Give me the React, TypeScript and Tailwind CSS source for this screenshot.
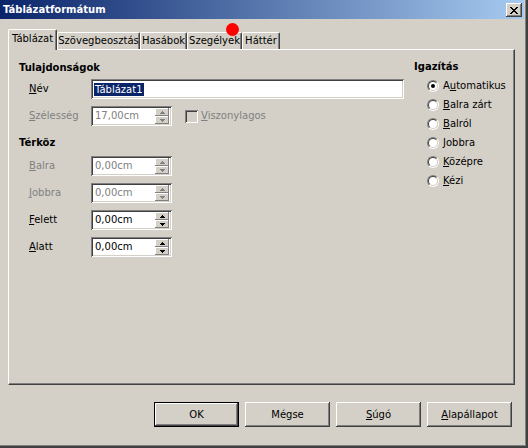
import React from 'react'

const raised =
  'bg-[#d4d0c8] shadow-[inset_-1px_-1px_#404040,inset_1px_1px_#ffffff,inset_-2px_-2px_#808080,inset_2px_2px_#d4d0c8]'
const spinBtn = 'bg-[#d4d0c8] shadow-[inset_-1px_-1px_#808080,inset_1px_1px_#ffffff]'
const sunken =
  'shadow-[inset_1px_1px_#808080,inset_-1px_-1px_#ffffff,inset_2px_2px_#404040,inset_-2px_-2px_#d4d0c8]'

function Arrow({ up, disabled }: { up?: boolean; disabled?: boolean }) {
  return (
    <svg width="5" height="3" viewBox="0 0 5 3" className="block">
      <path d={up ? 'M2 0h1v1h1v1h1v1H0V2h1V1h1z' : 'M0 0h5v1H4v1H3v1H2V2H1V1H0z'} fill={disabled ? '#808080' : '#000000'} />
    </svg>
  )
}

function Spin({ value, disabled }: { value: string; disabled?: boolean }) {
  return (
    <div className={`flex h-[20px] w-[81px] items-center bg-white p-[2px] ${sunken}`}>
      <span className={`flex-1 pl-[2px] ${disabled ? 'text-[#808080]' : 'text-black'}`}>{value}</span>
      <div className="mr-px flex h-[16px] w-[14px] flex-col">
        <div className={`flex h-[8px] items-center justify-center ${spinBtn}`}>
          <Arrow up disabled={disabled} />
        </div>
        <div className={`flex h-[8px] items-center justify-center ${spinBtn}`}>
          <Arrow disabled={disabled} />
        </div>
      </div>
    </div>
  )
}

function Label({ first, rest, disabled }: { first: string; rest: string; disabled?: boolean }) {
  return (
    <span className={`w-[62px] shrink-0 ${disabled ? 'text-[#808080]' : 'text-black'}`}>
      <u>{first}</u>
      {rest}
    </span>
  )
}

function Radio({ checked, pre, u, rest }: { checked?: boolean; pre?: string; u: string; rest: string }) {
  return (
    <div className="flex h-[19px] items-center pl-[13px]">
      <div className="h-[12px] w-[12px] rounded-full border border-t-[#808080] border-l-[#808080] border-r-white border-b-white">
        <div className="flex h-[10px] w-[10px] items-center justify-center rounded-full border border-t-[#404040] border-l-[#404040] border-r-[#d4d0c8] border-b-[#d4d0c8] bg-white">
          {checked && <div className="h-[4px] w-[4px] rounded-full bg-black" />}
        </div>
      </div>
      <span className="ml-[4px]">
        {pre}
        <u>{u}</u>
        {rest}
      </span>
    </div>
  )
}

function Tab({ label, w, active }: { label: string; w: string; active?: boolean }) {
  return (
    <div
      className={`${w} ${
        active ? 'relative z-10 -mb-px h-[21px] pb-[3px]' : 'h-[17px]'
      } flex items-center justify-center rounded-t-[2px] border-l border-t border-r border-l-white border-t-white border-r-[#404040] bg-[#d4d0c8] shadow-[inset_-1px_0_#808080]`}
    >
      {label}
    </div>
  )
}

function Button({ children, def }: { children: React.ReactNode; def?: boolean }) {
  return (
    <div className={`h-[25px] w-[85px] ${def ? 'border border-black' : ''}`}>
      <div className={`flex h-full w-full items-center justify-center ${raised}`}>{children}</div>
    </div>
  )
}

export default function App() {
  return (
    <div className="relative h-[448px] w-[528px] overflow-hidden font-['DejaVu_Sans',sans-serif] text-[10px] leading-[12px] text-black">
      <div className="h-full w-full border-r-2 border-b-2 border-[#404040]">
        <div className="flex h-full w-full flex-col border-r border-b border-[#808080] bg-[#d4d0c8] pr-px">
          {/* title bar */}
          <div className="flex h-[19px] items-center bg-[linear-gradient(to_right,#0a246a,#a6caf0)] pl-[3px] pr-[2px]">
            <span className="flex-1 font-bold text-white">Táblázatformátum</span>
            <div className={`mt-[1px] flex h-[14px] w-[16px] items-center justify-center ${raised}`}>
              <svg width="8" height="7" viewBox="0 0 8 7">
                <path d="M0 0h2v1h1v1h2V1h1V0h2v1H7v1H6v1H5v1h1v1h1v1h1v1H6V6H5V5H3v1H2v1H0V6h1V5h1V4h1V3H2V2H1V1H0z" fill="#000" />
              </svg>
            </div>
          </div>

          {/* tabs */}
          <div className="ml-[8px] mt-[10px] flex h-[20px] items-end">
            <Tab label="Táblázat" w="w-[49px]" active />
            <Tab label="Szövegbeosztás" w="w-[83px]" />
            <Tab label="Hasábok" w="w-[47px]" />
            <Tab label="Szegélyek" w="w-[55px]" />
            <Tab label="Háttér" w="w-[38px]" />
          </div>

          {/* panel */}
          <div className="ml-[8px] flex h-[336px] w-[507px] border-l border-t border-r border-b border-l-white border-t-white border-r-[#404040] border-b-[#404040] shadow-[inset_-1px_-1px_#808080]">
            <div className="w-[395px] pl-[10px] pt-[12px]">
              <div className="h-[13px] font-bold">Tulajdonságok</div>
              <div className="mt-[4px] flex h-[20px] items-center pl-[10px]">
                <Label first="N" rest="év" />
                <div className={`flex h-[20px] flex-1 items-center bg-white pl-[3px] ${sunken}`}>
                  <span className="bg-[#0a246a] px-px leading-[13px] text-white">Táblázat1</span>
                </div>
              </div>
              <div className="mt-[7px] flex h-[20px] items-center pl-[10px]">
                <Label first="S" rest="zélesség" disabled />
                <Spin value="17,00cm" disabled />
                <div className={`ml-[13px] h-[13px] w-[13px] bg-[#d4d0c8] ${sunken}`} />
                <span className="ml-[3px] text-[#808080]">
                  <u>V</u>iszonylagos
                </span>
              </div>
              <div className="mt-[11px] h-[13px] font-bold">Térköz</div>
              <div className="mt-[6px] flex h-[20px] items-center pl-[10px]">
                <Label first="B" rest="alra" disabled />
                <Spin value="0,00cm" disabled />
              </div>
              <div className="mt-[7px] flex h-[20px] items-center pl-[10px]">
                <Label first="J" rest="obbra" disabled />
                <Spin value="0,00cm" disabled />
              </div>
              <div className="mt-[7px] flex h-[20px] items-center pl-[10px]">
                <Label first="F" rest="elett" />
                <Spin value="0,00cm" />
              </div>
              <div className="mt-[7px] flex h-[20px] items-center pl-[10px]">
                <Label first="A" rest="latt" />
                <Spin value="0,00cm" />
              </div>
            </div>

            <div className="ml-[10px] pt-[11px]">
              <div className="h-[15px] font-bold">Igazítás</div>
              <Radio checked pre="A" u="u" rest="tomatikus" />
              <Radio u="B" rest="alra zárt" />
              <Radio u="B" rest="alról" />
              <Radio u="J" rest="obbra" />
              <Radio u="K" rest="özépre" />
              <Radio u="K" rest="ézi" />
            </div>
          </div>

          {/* buttons */}
          <div className="mt-[17px] flex justify-end gap-[6px] pr-[12px]">
            <Button def>OK</Button>
            <Button>Mégse</Button>
            <Button>
              <span>
                <u>S</u>úgó
              </span>
            </Button>
            <Button>
              <span>
                <u>A</u>lapállapot
              </span>
            </Button>
          </div>
        </div>
      </div>

      {/* red marker */}
      <div className="absolute left-[226px] top-[23px] h-[13px] w-[13px] rounded-full bg-[#ff0000]" />
    </div>
  )
}
